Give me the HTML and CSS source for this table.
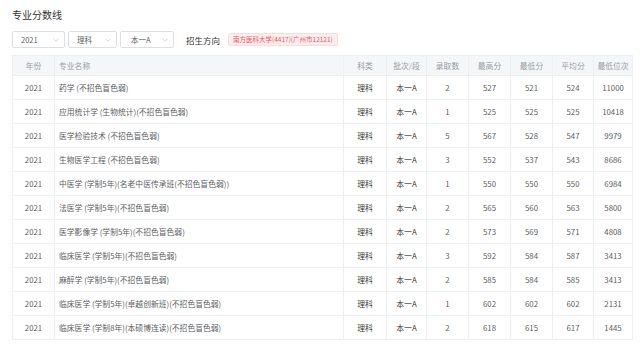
FILE: index.html
```html
<!DOCTYPE html>
<html lang="zh-CN">
<head>
<meta charset="utf-8">
<title>专业分数线</title>
<link rel="stylesheet" href="styles.css">
</head>
<body>
<div class="page">
  <h1 class="title">专业分数线</h1>
  <div class="filters">
    <div class="select s1"><span>2021</span><svg class="chev" viewBox="0 0 10 6"><path d="M1 1l4 4 4-4" /></svg></div>
    <div class="select s2"><span>理科</span><svg class="chev" viewBox="0 0 10 6"><path d="M1 1l4 4 4-4" /></svg></div>
    <div class="select s3"><span>本一A</span><svg class="chev" viewBox="0 0 10 6"><path d="M1 1l4 4 4-4" /></svg></div>
    <span class="label">招生方向</span>
    <span class="tag">南方医科大学(4417)(广州市12121)</span>
  </div>
  <table class="grid">
    <colgroup>
      <col class="c-year"><col class="c-name"><col class="c-n1"><col class="c-n2"><col class="c-n3"><col class="c-n4"><col class="c-n5"><col class="c-n6"><col class="c-n7">
    </colgroup>
    <thead>
      <tr><th>年份</th><th class="left">专业名称</th><th>科类</th><th>批次/段</th><th>录取数</th><th>最高分</th><th>最低分</th><th>平均分</th><th>最低位次</th></tr>
    </thead>
    <tbody>
      <tr><td>2021</td><td class="left">药学 (不招色盲色弱)</td><td class="dk">理科</td><td class="dk">本一A</td><td>2</td><td>527</td><td>521</td><td>524</td><td>11000</td></tr>
      <tr><td>2021</td><td class="left">应用统计学 (生物统计)(不招色盲色弱)</td><td class="dk">理科</td><td class="dk">本一A</td><td>1</td><td>525</td><td>525</td><td>525</td><td>10418</td></tr>
      <tr><td>2021</td><td class="left">医学检验技术 (不招色盲色弱)</td><td class="dk">理科</td><td class="dk">本一A</td><td>5</td><td>567</td><td>528</td><td>547</td><td>9979</td></tr>
      <tr><td>2021</td><td class="left">生物医学工程 (不招色盲色弱)</td><td class="dk">理科</td><td class="dk">本一A</td><td>3</td><td>552</td><td>537</td><td>543</td><td>8686</td></tr>
      <tr><td>2021</td><td class="left">中医学 (学制5年)(名老中医传承班(不招色盲色弱))</td><td class="dk">理科</td><td class="dk">本一A</td><td>1</td><td>550</td><td>550</td><td>550</td><td>6984</td></tr>
      <tr><td>2021</td><td class="left">法医学 (学制5年)(不招色盲色弱)</td><td class="dk">理科</td><td class="dk">本一A</td><td>2</td><td>565</td><td>560</td><td>563</td><td>5800</td></tr>
      <tr><td>2021</td><td class="left">医学影像学 (学制5年)(不招色盲色弱)</td><td class="dk">理科</td><td class="dk">本一A</td><td>2</td><td>573</td><td>569</td><td>571</td><td>4808</td></tr>
      <tr><td>2021</td><td class="left">临床医学 (学制5年)(不招色盲色弱)</td><td class="dk">理科</td><td class="dk">本一A</td><td>3</td><td>592</td><td>584</td><td>587</td><td>3413</td></tr>
      <tr><td>2021</td><td class="left">麻醉学 (学制5年)(不招色盲色弱)</td><td class="dk">理科</td><td class="dk">本一A</td><td>2</td><td>585</td><td>584</td><td>585</td><td>3413</td></tr>
      <tr><td>2021</td><td class="left">临床医学 (学制5年)(卓越创新班)(不招色盲色弱)</td><td class="dk">理科</td><td class="dk">本一A</td><td>1</td><td>602</td><td>602</td><td>602</td><td>2131</td></tr>
      <tr><td>2021</td><td class="left">临床医学 (学制8年)(本硕博连读)(不招色盲色弱)</td><td class="dk">理科</td><td class="dk">本一A</td><td>2</td><td>618</td><td>615</td><td>617</td><td>1445</td></tr>
    </tbody>
  </table>
</div>
</body>
</html>
```

FILE: styles.css
```css
* { box-sizing: border-box; }
html, body {
  margin: 0;
  padding: 0;
  background: #fff;
}
body {
  font-family: "Noto Sans CJK SC", "Noto Sans", sans-serif;
  color: #606266;
}
.page {
  padding: 8px 8px 0 12px;
}
.title {
  margin: 0;
  font-size: 10px;
  line-height: 14px;
  font-weight: 400;
  color: #333;
}
.filters {
  display: flex;
  align-items: center;
  margin-top: 9px;
  height: 17px;
}
.select {
  display: flex;
  align-items: center;
  justify-content: space-between;
  height: 17px;
  padding: 0 5px 0 8px;
  border: 1px solid #dcdfe6;
  border-radius: 2px;
  font-size: 7.5px;
  color: #606266;
  margin-right: 3px;
}
.s1 { width: 53px; }
.s2 { width: 49px; }
.s3 { width: 54px; }
.s3 span { padding-left: 2px; }
.chev {
  width: 6px;
  height: 4px;
  fill: none;
  stroke: #c0c4cc;
  stroke-width: 1.2;
}
.label {
  margin-left: 9px;
  font-size: 8.5px;
  color: #333;
}
.tag {
  margin-left: 8px;
  height: 13px;
  line-height: 11px;
  padding: 0 4px;
  font-size: 6.5px;
  color: #e8585a;
  background: #fdeeee;
  border: 1px solid #fbdcdc;
  border-radius: 2px;
}
.grid {
  margin-top: 7px;
  width: 620px;
  border-collapse: collapse;
  table-layout: fixed;
  font-size: 7.8px;
  border-left: 1px solid #f0f0f2;
  border-right: 1px solid #f0f0f2;
}
.c-year { width: 42px; }
.c-name { width: 289px; }
.c-n1 { width: 43px; }
.c-n2 { width: 40px; }
.c-n3 { width: 42px; }
.c-n4 { width: 42px; }
.c-n5 { width: 42px; }
.c-n6 { width: 41px; }
.c-n7 { width: 39px; }
.grid th, .grid td {
  text-align: center;
  padding: 0;
  border: 1px solid #eeeff2;
  white-space: nowrap;
  overflow: hidden;
}
.grid th {
  height: 20px;
  background: #f5f6f8;
  color: #9a9ca3;
  font-weight: 400;
}
.grid td {
  height: 24px;
  color: #5c5e63;
}
.grid .left {
  text-align: left;
  padding-left: 4px;
}
.grid td.dk { color: #3a3a3a; }
```
